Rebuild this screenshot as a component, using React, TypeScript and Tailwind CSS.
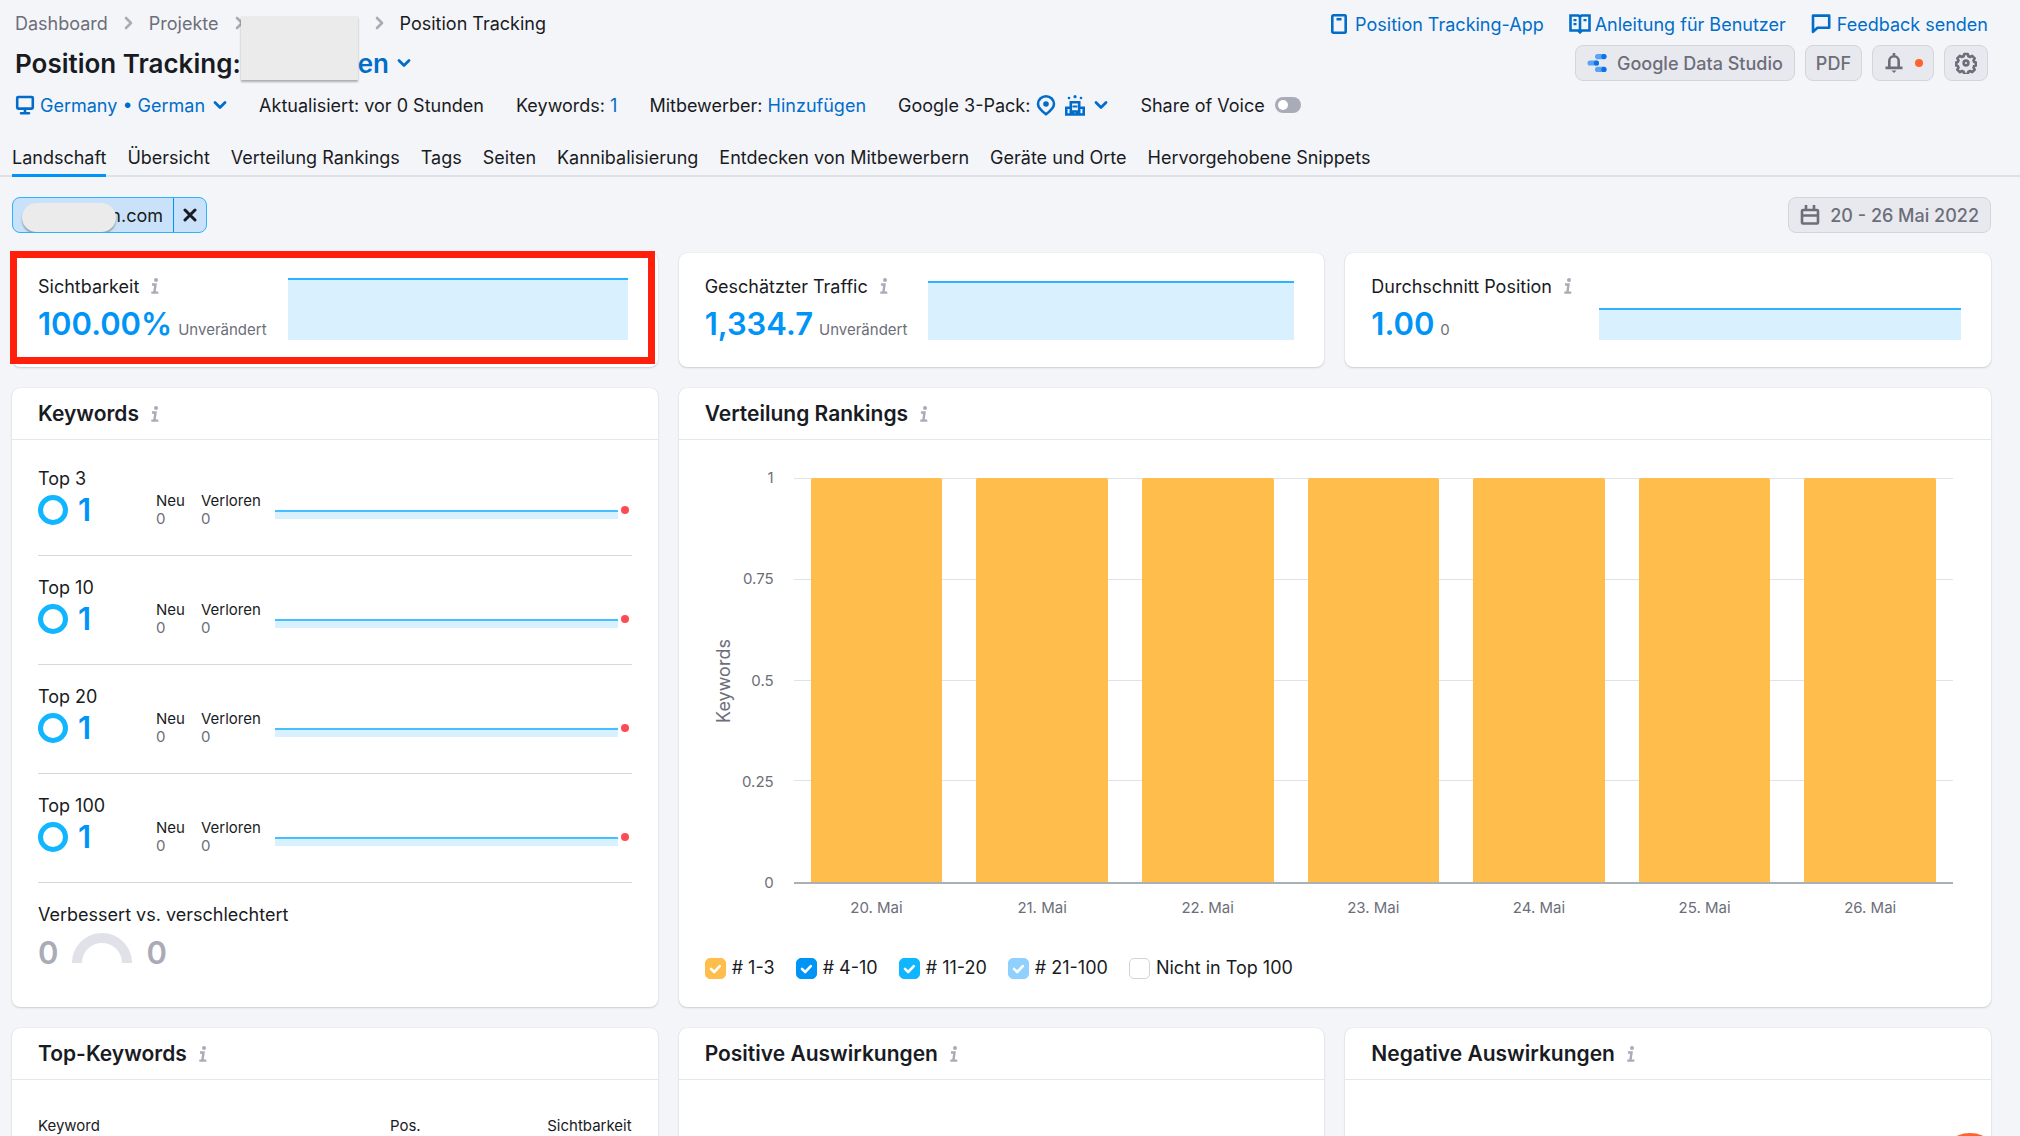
import type { ReactNode } from "react"

interface MetricProps {
  label: string
  value: string
  diff: string
  chartHeight: string
}

const tabs = [
  "Landschaft",
  "Übersicht",
  "Verteilung Rankings",
  "Tags",
  "Seiten",
  "Kannibalisierung",
  "Entdecken von Mitbewerbern",
  "Geräte und Orte",
  "Hervorgehobene Snippets",
]

const keywordGroups = ["Top 3", "Top 10", "Top 20", "Top 100"]

const days = [
  { date: "20. Mai", value: 1 },
  { date: "21. Mai", value: 1 },
  { date: "22. Mai", value: 1 },
  { date: "23. Mai", value: 1 },
  { date: "24. Mai", value: 1 },
  { date: "25. Mai", value: 1 },
  { date: "26. Mai", value: 1 },
]

const legend = [
  { id: "r3", label: "# 1-3", box: "border-[#ffbe4b] bg-[#ffbe4b]", checked: true },
  { id: "r10", label: "# 4-10", box: "border-[#0094f7] bg-[#0094f7]", checked: true },
  { id: "r20", label: "# 11-20", box: "border-[#10b6ff] bg-[#10b6ff]", checked: true },
  { id: "r100", label: "# 21-100", box: "border-[#8fd0ff] bg-[#8fd0ff]", checked: true },
  { id: "none", label: "Nicht in Top 100", box: "border-[#d0d3da] bg-white", checked: false },
]

function ChevronRight() {
  return (
    <svg className="h-3.5 w-[9px] shrink-0 text-[#a9abb6]" viewBox="0 0 9 14" fill="none" stroke="currentColor" strokeWidth="2.6">
      <path d="M2 2l5 5-5 5" strokeLinecap="round" strokeLinejoin="round" />
    </svg>
  )
}

function ChevronDown() {
  return (
    <svg className="h-2.5 w-3.5 shrink-0" viewBox="0 0 14 10" fill="none" stroke="currentColor" strokeWidth="2.8">
      <path d="M2 2.5l5 5 5-5" strokeLinecap="round" strokeLinejoin="round" />
    </svg>
  )
}

function InfoButton() {
  return (
    <button type="button" aria-label="Info" className="ml-1.5 px-1.5 text-[#a9abb6]">
      <svg className="h-4 w-2" viewBox="0 0 8 16" fill="none" stroke="currentColor" strokeWidth="2.4">
        <circle cx="5" cy="2" r="2" fill="currentColor" stroke="none" />
        <path d="M1 6.5h3.5L3.400 14.500M.3 14.600h7" />
      </svg>
    </button>
  )
}

function Card({ title, className, children }: { title: string; className?: string; children?: ReactNode }) {
  return (
    <section className={`flex flex-col rounded-lg bg-white shadow-[0_1px_2px_rgba(25,27,35,0.16),0_0_1px_rgba(25,27,35,0.16)] ${className ?? ""}`}>
      <header className="flex h-[52px] items-center border-b border-[#e6e7ec] px-[26px]">
        <h2 className="text-[21px] leading-7 font-semibold">{title}</h2>
        <InfoButton />
      </header>
      {children}
    </section>
  )
}

function MetricCard({ label, value, diff, chartHeight }: MetricProps) {
  return (
    <section className="flex h-[114px] rounded-lg bg-white pr-[30px] pl-[26px] shadow-[0_1px_2px_rgba(25,27,35,0.16),0_0_1px_rgba(25,27,35,0.16)]">
      <div className="pt-[21px]">
        <div className="flex h-6 items-center text-[18px]">
          {label}
          <InfoButton />
        </div>
        <div className="mt-2 flex items-baseline gap-1.5 leading-9">
          <span className="text-[31px] font-semibold text-[#0094f7]">{value}</span>
          <span className="text-[15px] text-[#6c6e79]">{diff}</span>
        </div>
      </div>
      <div className="ml-[21px] flex flex-1 flex-col justify-end pb-[27px]">
        <div className={`border-t-2 border-[#2bb3ff] bg-[#d9f0ff] ${chartHeight}`} />
      </div>
    </section>
  )
}

function KeywordRow({ label }: { label: string }) {
  return (
    <li className="h-[109px] border-b border-[#d5d8e0] pt-5">
      <div className="text-[18px] leading-6">{label}</div>
      <div className="mt-1 flex h-[30px] items-center">
        <span className="size-[30px] rounded-full border-5 border-[#10b6ff]" />
        <span className="ml-2.5 w-[78px] text-[31px] font-semibold text-[#0094f7]">1</span>
        <dl className="flex gap-4 text-[15px] leading-[18px]">
          <div>
            <dt>Neu</dt>
            <dd className="text-[#6c6e79]">0</dd>
          </div>
          <div>
            <dt>Verloren</dt>
            <dd className="text-[#6c6e79]">0</dd>
          </div>
        </dl>
        <div className="mt-2 ml-3.5 h-[9px] flex-1 border-t-2 border-[#44bfff] bg-[#d9f0ff]" />
        <span className="mx-[3px] size-2 rounded-full bg-[#ff4953]" />
      </div>
    </li>
  )
}

function RankingChart() {
  return (
    <div className="flex pt-[38px] pr-[38px] pl-[35px]">
      <div className="flex h-[405px] w-5 items-center justify-center">
        <span className="-rotate-90 text-[18px] leading-5 text-[#6c6e79]">Keywords</span>
      </div>
      <div className="-my-2.5 flex h-[425px] w-[40px] flex-col justify-between text-right text-[15px] leading-5 text-[#6c6e79]">
        <span>1</span>
        <span>0.75</span>
        <span>0.5</span>
        <span>0.25</span>
        <span>0</span>
      </div>
      <div className="ml-5 flex-1">
        <div className="relative h-[406px] border-b-2 border-[#a9b0b6]">
          <div className="absolute inset-0 flex flex-col justify-between">
            <div className="h-px bg-[#e0e1e9]" />
            <div className="h-px bg-[#e0e1e9]" />
            <div className="h-px bg-[#e0e1e9]" />
            <div className="h-px bg-[#e0e1e9]" />
            <div className="h-px" />
          </div>
          <div className="absolute inset-0 grid grid-cols-7">
            {days.map((day) => (
              <div key={day.date} className="flex items-end px-[17px]">
                <div className="w-full rounded-t-xs bg-[#ffbe4b]" style={{ height: `${day.value * 100}%` }} />
              </div>
            ))}
          </div>
        </div>
        <div className="mt-3.5 grid grid-cols-7 text-center text-[15px] leading-5 text-[#6c6e79]">
          {days.map((day) => (
            <span key={day.date}>{day.date}</span>
          ))}
        </div>
      </div>
    </div>
  )
}

function Legend() {
  return (
    <div className="mt-[38px] flex gap-[21px] px-[26px]">
      {legend.map((item) => (
        <label key={item.id} htmlFor={item.id} className="flex items-center gap-1.5 text-[18px] leading-6">
          <span className="relative size-[21px]">
            <input
              id={item.id}
              type="checkbox"
              defaultChecked={item.checked}
              className={`peer block size-[21px] appearance-none rounded-[5px] border ${item.box}`}
            />
            <svg
              className="pointer-events-none absolute inset-0 hidden text-white peer-checked:block"
              viewBox="0 0 21 21"
              fill="none"
              stroke="currentColor"
              strokeWidth="2.6"
            >
              <path d="M6 10.8l3.2 3.2 5.600-5.800" strokeLinecap="round" strokeLinejoin="round" />
            </svg>
          </span>
          {item.label}
        </label>
      ))}
    </div>
  )
}

function Header() {
  return (
    <header className="flex justify-between pr-8 pl-[15px] text-[18px]">
      <div className="pt-[11px]">
        <div className="relative">
          <nav className="flex h-6 items-center text-[#6c6e79]">
            <a href="#dashboard">Dashboard</a>
            <span className="mx-4"><ChevronRight /></span>
            <a href="#projekte">Projekte</a>
            <span className="mr-[131px] ml-4"><ChevronRight /></span>
            <ChevronRight />
            <span className="ml-4 text-[#191b23]">Position Tracking</span>
          </nav>
          <h1 className="mt-3 flex h-8 items-center text-[26px] font-semibold">
            Position Tracking:
            <button type="button" className="ml-[117px] flex items-center gap-2 text-[#006dca]">
              en
              <ChevronDown />
            </button>
          </h1>
          <div className="absolute top-[5px] left-[226px] h-16 w-[117px] bg-[#ebebeb] shadow-[0_2px_2px_rgba(0,0,0,0.3)]" />
        </div>
        <div className="mt-3.5 flex h-6 items-center gap-8 whitespace-nowrap">
          <button type="button" className="flex items-center text-[#006dca]">
            <svg className="mr-[5px] size-5" viewBox="0 0 20 20" fill="none" stroke="currentColor" strokeWidth="2.600">
              <rect x="2.200" y="2" width="15.600" height="11.600" rx="1" />
              <path d="M10 14v4M6 18.200h8" strokeLinecap="round" />
            </svg>
            Germany • German
            <span className="ml-2"><ChevronDown /></span>
          </button>
          <span>Aktualisiert: vor 0 Stunden</span>
          <span>
            Keywords: <a href="#keywords" className="text-[#006dca]">1</a>
          </span>
          <span>
            Mitbewerber: <a href="#mitbewerber" className="text-[#006dca]">Hinzufügen</a>
          </span>
          <button type="button" className="flex items-center">
            Google 3-Pack:
            <span className="ml-1.5 flex items-center gap-2 text-[#006dca]">
              <svg className="h-[21px] w-5" viewBox="0 0 20 21" fill="none" stroke="currentColor" strokeWidth="2.600">
                <path d="M10 19.200C5.500 15.800 2 12.500 2 8.900a8 7.600 0 0 1 16 0c0 3.600-3.500 6.900-8 10.300z" />
                <circle cx="10" cy="9" r="2.800" fill="currentColor" stroke="none" />
              </svg>
              <svg className="h-[21px] w-[22px]" viewBox="0 0 22 21" fill="none" stroke="currentColor" strokeWidth="2.600">
                <path d="M6.800 19V7.300h8.400V19M6 12.800H2.300v6.700h17.400v-6.700H16M9 20v-3.500h4V20" />
                <path d="M8.500 11.500h5" strokeWidth="2" />
                <circle cx="5" cy="3" r="1.300" fill="currentColor" stroke="none" />
                <circle cx="11" cy="1.700" r="1.600" fill="currentColor" stroke="none" />
                <circle cx="17" cy="3" r="1.300" fill="currentColor" stroke="none" />
              </svg>
              <ChevronDown />
            </span>
          </button>
          <label className="flex items-center gap-2.5">
            Share of Voice
            <input
              type="checkbox"
              role="switch"
              className="h-4 w-[26px] appearance-none rounded-full bg-[#a9abb6] p-[3px] before:block before:size-2.5 before:rounded-full before:bg-white checked:bg-[#009f81] checked:before:ml-2.5"
            />
          </label>
        </div>
      </div>

      <div className="flex flex-col items-end pt-3 whitespace-nowrap">
        <div className="flex h-6 items-center gap-[25px] text-[#006dca]">
          <a href="#app" className="flex items-center gap-2">
            <svg className="h-5 w-4" viewBox="0 0 16 20" fill="none" stroke="currentColor" strokeWidth="2.600">
              <rect x="1.300" y="1.300" width="13.400" height="17.400" rx="1" />
              <path d="M5.500 5.200h5" />
            </svg>
            Position Tracking-App
          </a>
          <a href="#anleitung" className="flex items-center gap-1">
            <svg className="h-5 w-[22px]" viewBox="0 0 22 20" fill="none" stroke="currentColor" strokeWidth="2.600">
              <path d="M11 3v16M11 3L9.500 1.500H1.500v15h7.700l1.800 1.800 1.800-1.800h7.700v-15h-8z" />
              <path d="M4.500 6.200h3M4.500 10.200h3M14.500 6.200h3" strokeWidth="2.200" />
            </svg>
            Anleitung für Benutzer
          </a>
          <a href="#feedback" className="flex items-center gap-1.5">
            <svg className="size-5" viewBox="0 0 20 20" fill="none" stroke="currentColor" strokeWidth="2.600">
              <path d="M2 17.800V1.600h16.200v12.200H6.500z" strokeLinejoin="round" />
            </svg>
            Feedback senden
          </a>
        </div>
        <div className="mt-[9px] flex gap-2.5 font-medium text-[#6c6e79]">
          <button type="button" className="flex h-9 items-center gap-2.5 rounded-lg border border-[#d3d5dc] bg-[#e8e9ee] px-[11px]">
            <svg className="size-5" viewBox="0 0 20 20">
              <rect x="8" y="1" width="11.500" height="5.200" rx="2.600" fill="#5aa2f5" />
              <rect x="0.500" y="7.400" width="11.500" height="5.200" rx="2.600" fill="#5aa2f5" />
              <rect x="8" y="13.800" width="11.500" height="5.200" rx="2.600" fill="#5aa2f5" />
              <circle cx="16.900" cy="3.600" r="2.600" fill="#0b72e7" />
              <circle cx="9.400" cy="10" r="2.600" fill="#0b72e7" />
              <circle cx="16.900" cy="16.400" r="2.600" fill="#0b72e7" />
            </svg>
            Google Data Studio
          </button>
          <button type="button" className="h-9 rounded-lg border border-[#d3d5dc] bg-[#e8e9ee] px-2.5">PDF</button>
          <button type="button" aria-label="Benachrichtigungen" className="flex h-9 items-center gap-2.5 rounded-lg border border-[#d3d5dc] bg-[#e8e9ee] px-2.5">
            <svg className="h-5 w-[22px]" viewBox="0 0 22 20" fill="none" stroke="currentColor" strokeWidth="2.600">
              <path d="M6.300 15V8a4.700 4.700 0 0 1 9.400 0V15M2.500 14.900h17M11 0v3" />
              <path d="M8.500 17.600h5L11 20z" fill="currentColor" stroke="none" />
            </svg>
            <span className="size-2 rounded-full bg-[#ff622d]" />
          </button>
          <button type="button" aria-label="Einstellungen" className="flex h-9 w-11 items-center justify-center rounded-lg border border-[#d3d5dc] bg-[#e8e9ee]">
            <svg className="size-[22px]" viewBox="0 0 22 22" fill="none" stroke="currentColor" strokeWidth="2.600" strokeLinejoin="round">
              <path d="M9.200 2h3.600l.6 2.300 1.700.7 2.100-1.200 2.500 2.500-1.200 2.100.7 1.700 1.800.5v2.800l-1.800.5-.7 1.700 1.200 2.100-2.500 2.500-2.100-1.200-1.700.7-.6 2.300H9.200l-.6-2.300-1.700-.7-2.100 1.200-2.500-2.500 1.200-2.100-.7-1.700-1.600-.5v-2.800l1.600-.5.7-1.700-1.200-2.100 2.500-2.500 2.100 1.200 1.700-.7z" />
              <circle cx="11" cy="11" r="2.400" />
            </svg>
          </button>
        </div>
      </div>
    </header>
  )
}

export default function App() {
  return (
    <div className="h-screen overflow-hidden bg-[#f4f5f9] font-['Inter',sans-serif] text-[#191b23]">
      <Header />

      <nav className="mt-[29px] flex gap-[21px] border-b-2 border-[#e0e1e6] px-3 text-[18px] leading-6 whitespace-nowrap">
        {tabs.map((tab, i) => (
          <a
            key={tab}
            href={`#tab-${i}`}
            className={`-mb-0.5 border-b-3 pb-1 ${i === 0 ? "border-[#0094f7]" : "border-transparent"}`}
          >
            {tab}
          </a>
        ))}
      </nav>

      <main className="pr-[29px] pl-3">
        <div className="mt-5 flex justify-between text-[18px]">
          <div className="relative flex h-9 overflow-hidden rounded-lg border border-[#2bb3ff] bg-[#c9e2f9]">
            <span className="flex w-[161px] items-center justify-end border-r border-[#0094f7] pr-2.5">n.com</span>
            <button type="button" aria-label="Entfernen" className="flex w-8 items-center justify-center">
              <svg className="size-3.5" viewBox="0 0 14 14" stroke="currentColor" strokeWidth="3" strokeLinecap="round">
                <path d="M2 2l10 10M12 2L2 12" />
              </svg>
            </button>
            <div className="absolute top-[5px] left-[9px] h-[29px] w-[94px] rounded-full bg-[#ebebeb] shadow-[0_2px_2px_rgba(0,0,0,0.3)]" />
          </div>
          <button type="button" className="flex h-9 items-center gap-2.5 rounded-lg border border-[#d3d5dc] bg-[#e8e9ee] px-[11px] font-medium text-[#6c6e79]">
            <svg className="size-5" viewBox="0 0 20 20" fill="none" stroke="currentColor" strokeWidth="2.600">
              <rect x="2" y="5" width="16" height="13.500" rx="1" />
              <path d="M2 10.500h16M6 0v5M14 0v5" />
            </svg>
            20 - 26 Mai 2022
          </button>
        </div>

        <div className="mt-5 grid grid-cols-3 gap-[21px]">
          <div className="relative">
            <MetricCard label="Sichtbarkeit" value="100.00%" diff="Unverändert" chartHeight="h-[62px]" />
            <div className="pointer-events-none absolute -top-0.5 right-[3px] bottom-[3px] -left-0.5 border-7 border-[#ff1f0a]" />
          </div>
          <MetricCard label="Geschätzter Traffic" value="1,334.7" diff="Unverändert" chartHeight="h-[59px]" />
          <MetricCard label="Durchschnitt Position" value="1.00" diff="0" chartHeight="h-8" />

          <Card title="Keywords" className="h-[619px]">
            <ul className="px-[26px] pt-[7px]">
              {keywordGroups.map((group) => (
                <KeywordRow key={group} label={group} />
              ))}
            </ul>
            <div className="px-[26px] pt-5">
              <div className="text-[18px] leading-6">Verbessert vs. verschlechtert</div>
              <div className="mt-2 flex h-8 items-end gap-3.5 text-[31px] leading-7 font-semibold text-[#a9abb6]">
                <span>0</span>
                <svg className="mb-1 h-[30px] w-[60px]" viewBox="0 0 60 30" fill="none">
                  <path d="M5 30a25 25 0 0 1 50 0" stroke="#e0e1e9" strokeWidth="10" />
                </svg>
                <span>0</span>
              </div>
            </div>
          </Card>

          <Card title="Verteilung Rankings" className="col-span-2 h-[619px]">
            <RankingChart />
            <Legend />
          </Card>

          <Card title="Top-Keywords" className="h-[400px]">
            <div className="px-[26px] pt-[34px]">
              <table className="w-full text-[15px] leading-6">
                <thead>
                  <tr>
                    <th className="text-left font-normal">Keyword</th>
                    <th className="w-[120px] text-right font-normal">Pos.</th>
                    <th className="w-[211px] text-right font-normal">Sichtbarkeit</th>
                  </tr>
                </thead>
              </table>
            </div>
          </Card>
          <Card title="Positive Auswirkungen" className="h-[400px]" />
          <Card title="Negative Auswirkungen" className="h-[400px]" />
        </div>
      </main>

      <button type="button" aria-label="Chat" className="fixed right-[18px] -bottom-[61px] size-16 rounded-full bg-[#ff622d]" />
    </div>
  )
}
